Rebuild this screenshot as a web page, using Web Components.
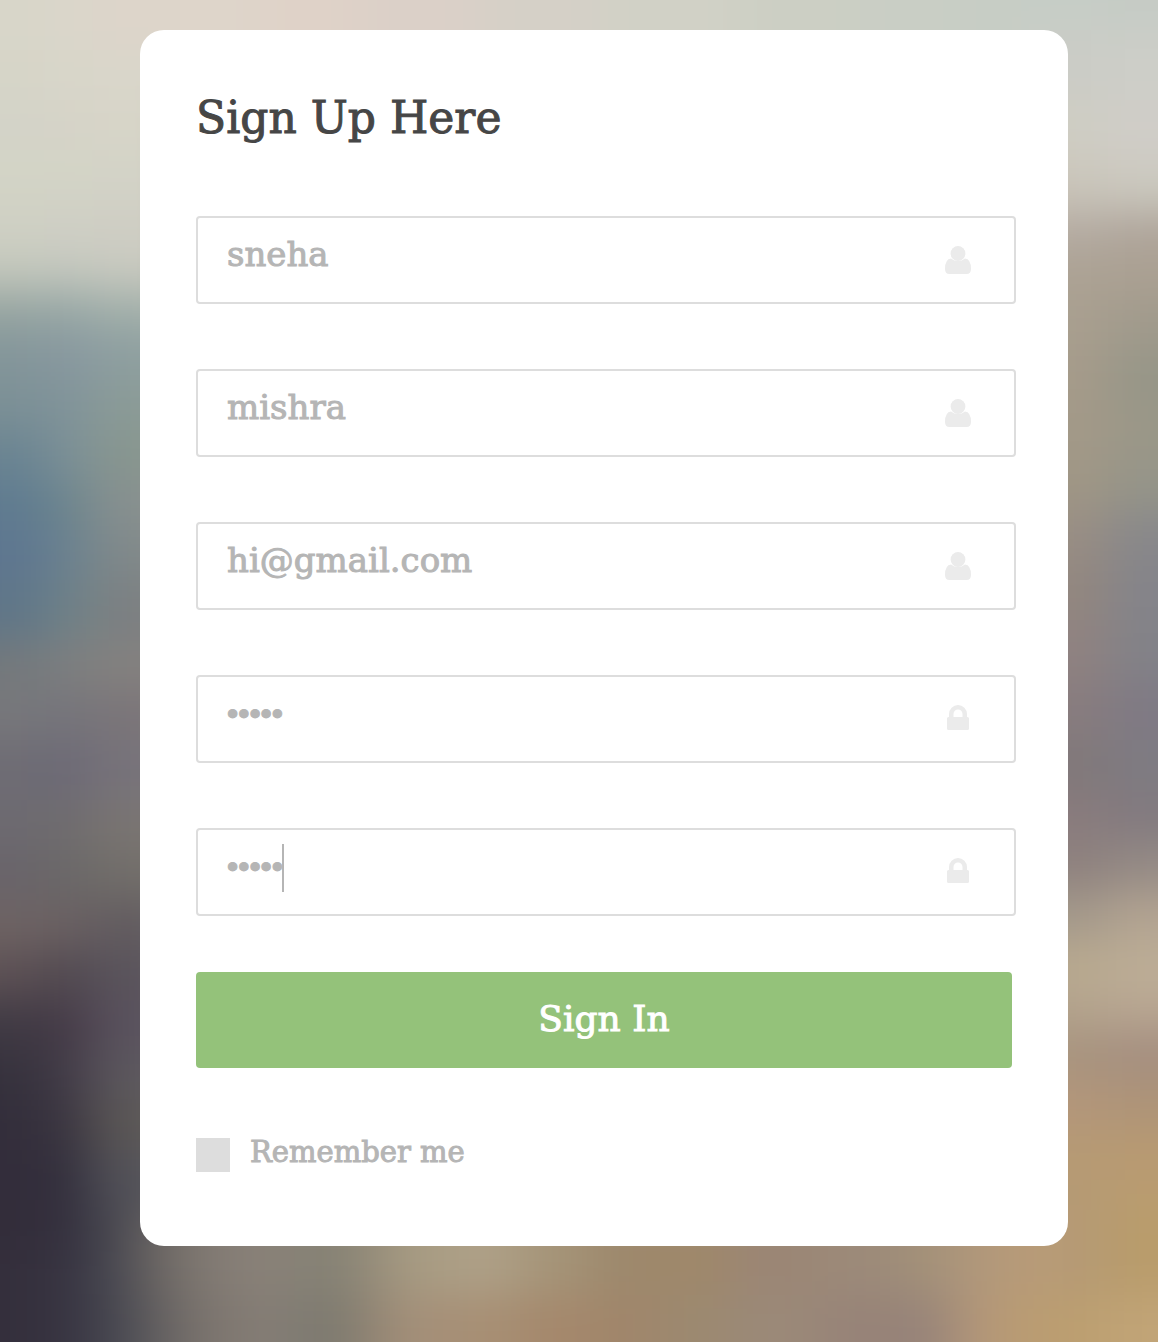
<!DOCTYPE html>
<html lang="en">
<head>
<meta charset="utf-8">
<meta name="viewport" content="width=device-width, initial-scale=1">
<title>Sign Up Here</title>
<style>
  :root {
    --ink: #464646;
    --muted: #b5b5b5;
    --line: #dddddd;
    --icon: #ebebeb;
    --accent: #94c27a;
  }
  body {
    margin: 0;
    min-height: 100vh;
    font-family: "DejaVu Serif", serif;
    color: var(--ink);
    -webkit-text-stroke: 1px currentColor;
  }
</style>
</head>
<body>
<sign-up-page>
  <sign-up-card heading="Sign Up Here">
    <form-field label="First name" type="text" value="sneha" icon="user"></form-field>
    <form-field label="Last name" type="text" value="mishra" icon="user"></form-field>
    <form-field label="Email" type="email" value="hi@gmail.com" icon="user"></form-field>
    <form-field label="Password" type="password" value="hello" icon="lock"></form-field>
    <form-field label="Confirm password" type="password" value="hello" icon="lock" caret></form-field>
    <submit-button slot="actions">Sign In</submit-button>
    <check-option slot="actions">Remember me</check-option>
  </sign-up-card>
</sign-up-page>

<script>
  function mount(host, html) {
    const template = document.createElement('template');
    template.innerHTML = html;
    host.attachShadow({ mode: 'open' }).append(template.content.cloneNode(true));
  }

  // Out-of-focus photo: coarse colour cells [x, y, width, height, colour] softened by one blur.
  function backdropCells() {
    const cells = [];
    const left = [
      [0, 'd8d6c9 dad6ca ddd5ca'], [50, 'd6d5c8 d8d6c9 d9d6ca'], [100, 'd3d3c8 d6d3c8 d7d5c8'],
      [150, 'd3d4c6 d3d4c6 d3d3c7'], [200, 'cfd0c4 cfcfc5 cfcec4'], [250, 'c3c7bc c3c7be c8c9bf'],
      [290, '98a6a2 98a8a6 a3b0aa'], [330, '84969a 8898a0 8e9fa0'], [380, '7c9096 80939a 8b9b97'],
      [430, '6a8492 7c9097 88968f'], [480, '5f7b90 6d868e 88908f'], [530, '5e7690 6a8290 81898a'],
      [580, '5f7688 6f8288 7c8082'], [640, '74797c 7d7f80 84817f'], [690, '77777b 75747b 7b7579'],
      [740, '6e6c74 6c6976 77737a'], [800, '6d6a70 6f6c6e 7a7572'], [850, '69646a 6a6868 726e6a'],
      [900, '6e6363 6a6062 625c60'], [950, '5c5054 504850 5a545c'], [1000, '403a44 453a47 5a525e'],
      [1050, '36323d 433c48 5c585e'], [1100, '332e3b 3b3641 5c5856'], [1150, '332d3b 33303d 54535a'],
      [1200, '332d3a 34303e 4c4c54'], [1250, '342f3c 383542 4a4a54']
    ];
    const right = [
      [0, 'c6cdc6 c5cbc5'], [30, 'cbccc6 cdcec8'], [100, 'cfcdc3 d0cdc8'], [160, 'cac5ba cbc9bf'],
      [210, 'b5aca3 b0a69c'], [250, 'aca294 aaa092'], [300, 'a99f8f a09a8c'], [350, 'a69b8a 969688'],
      [400, 'a39988 9a9788'], [460, 'a09685 959589'], [510, '998e84 88888a'], [560, '93877f 84848a'],
      [620, '908280 828288'], [680, '887c7e 7f7a84'], [740, '807879 7e7b82'], [790, '897b7d 827a7f'],
      [840, '8e817e 948a85'], [890, 'a3988a b2a391'], [940, 'b8a98f bcad96'], [990, 'b3a38d b8a692'],
      [1030, 'a8947f a58f80'], [1080, 'b3967a ae9478'], [1130, 'b69a74 b89a72'], [1180, 'b59a74 b99c70'],
      [1240, 'b39770 b99c6b'], [1300, 'bfa075 c0a271']
    ];
    const top = [[180, 'ded5ca'], [260, 'dfd2c8'], [360, 'dbd0c8'], [480, 'd5d0c7'], [600, 'd1d1c6'],
      [740, 'cccfc4'], [860, 'c9cec5'], [960, 'c7cdc5']];
    const bottom = [[100, '474851 464750'], [130, '635e5e 59575b'], [160, '77716b 706b68'],
      [200, '857d76 807871'], [250, '8a8278 857e76'], [300, '848174 7b796f'], [350, '948b79 908474'],
      [390, 'a89c83 a59079'], [450, 'aea087 a78f74'], [520, 'a59478 a5886c'], [590, '9d886c a0866b'],
      [660, '9f886a 9c8970'], [730, '9b8675 9b8978'], [820, '9c8a79 978378'], [900, 'a39179 968379'],
      [950, 'b0977b b2967a'], [1000, 'b89b78 ba9c72'], [1060, 'b59a74 bc9f70'], [1110, 'b99c6b c1a477']];
    const columns = (rows, edges) => rows.forEach(([y, colours], i) => {
      const end = i + 1 < rows.length ? rows[i + 1][0] : 1440;
      const from = i ? y : -100;
      colours.split(' ').forEach((c, k) =>
        cells.push([edges[k], from, edges[k + 1] - edges[k], end - from, c]));
    });
    columns(left, [-100, 45, 92, 190]);
    columns(right, [1010, 1108, 1260]);
    top.forEach(([x, c], i) => {
      const end = top[i + 1] ? top[i + 1][0] : 1020;
      cells.push([x, -100, end - x, 200, c]);
    });
    bottom.forEach(([x, colours], i) => {
      const end = bottom[i + 1] ? bottom[i + 1][0] : 1260;
      const [a, b] = colours.split(' ');
      cells.push([x, 1210, end - x, 85, a], [x, 1295, end - x, 145, b]);
    });
    return cells.map(([x, y, w, h, c]) =>
      `<rect x="${x}" y="${y}" width="${w + 1}" height="${h + 1}" fill="#${c}"/>`).join('');
  }

  customElements.define('sign-up-page', class extends HTMLElement {
    constructor() {
      super();
      mount(this, `
        <style>
          :host { display: grid; box-sizing: border-box; min-height: 100vh; overflow: hidden; }
          svg, main { grid-area: 1 / 1; }
          svg { width: 100%; height: 100%; min-height: 0; contain: size; }
          main { position: relative; box-sizing: border-box; padding: 30px 90px 96px 140px; }
          @media (max-width: 700px) { main { padding: 24px; } }
        </style>
        <svg viewBox="0 0 1158 1342" preserveAspectRatio="none" aria-hidden="true">
          <defs>
            <filter id="soft" filterUnits="userSpaceOnUse" x="-100" y="-100" width="1360" height="1540" color-interpolation-filters="sRGB">
              <feGaussianBlur stdDeviation="26 20"/>
            </filter>
          </defs>
          <g filter="url(#soft)">
            <rect x="-100" y="-100" width="1360" height="1540" fill="#a9a093"/>
            ${backdropCells()}
          </g>
        </svg>
        <main><slot></slot></main>`);
    }
  });

  customElements.define('sign-up-card', class extends HTMLElement {
    constructor() {
      super();
      mount(this, `
        <style>
          :host { display: block; background: #fff; border-radius: 24px; padding: 60px 52px 74px 56px; }
          form { display: flex; flex-direction: column; gap: 56px; }
          h1 { margin: 0; font-size: 44px; line-height: 56px; font-weight: 400; padding-bottom: 14px; }
          .fields { display: flex; flex-direction: column; gap: 65px; }
          .actions { display: flex; flex-direction: column; gap: 70px; padding-right: 4px; }
        </style>
        <form>
          <h1></h1>
          <div class="fields"><slot></slot></div>
          <div class="actions"><slot name="actions"></slot></div>
        </form>`);
      this.shadowRoot.querySelector('h1').textContent = this.getAttribute('heading');
    }
  });

  const icons = {
    user: `<circle cx="15" cy="8.500" r="7.400"/>
      <path d="M8 13.500 Q11 16 15 16 Q19 16 22 13.500 Q28 14 28 24 Q28 29 23.500 29 H6.500 Q2 29 2 24 Q2 14 8 13.500Z"/>`,
    lock: `<path fill-rule="evenodd" d="M6 13 V10 A9 9 0 0 1 24 10 V13 H24.500 Q26 13 26 14.500 V24.500 Q26 26 24.500 26 H5.500 Q4 26 4 24.500 V14.500 Q4 13 5.500 13Z M10.500 13 H19.500 V10 A4.500 4.500 0 0 0 10.500 10Z"/>`
  };

  customElements.define('form-field', class extends HTMLElement {
    constructor() {
      super();
      mount(this, `
        <style>
          :host {
            display: flex; align-items: center; box-sizing: border-box; height: 88px;
            border: 2px solid var(--line); border-radius: 4px; padding: 0 41px 0 29px; position: relative;
          }
          input {
            flex: 1; min-width: 0; height: 84px; box-sizing: border-box; border: 0; outline: 0;
            margin: 0; padding: 0 0 12px; background: none; color: var(--muted);
            font: 34px "DejaVu Serif", serif; -webkit-text-stroke: 1px currentColor;
          }
          input[type=password] { font: 32px "Liberation Sans", sans-serif; }
          svg { flex: none; width: 30px; height: 30px; fill: var(--icon); }
          .caret { position: absolute; left: 84px; top: 14px; width: 2px; height: 48px; background: var(--muted); }
        </style>
        <input>
        <svg viewBox="0 0 30 30" aria-hidden="true">${icons[this.getAttribute('icon')]}</svg>
        ${this.hasAttribute('caret') ? '<span class="caret"></span>' : ''}`);
      const input = this.shadowRoot.querySelector('input');
      input.type = this.getAttribute('type');
      input.value = this.getAttribute('value');
      input.setAttribute('aria-label', this.getAttribute('label'));
    }
  });

  customElements.define('submit-button', class extends HTMLElement {
    constructor() {
      super();
      mount(this, `
        <style>
          :host { display: block; }
          button {
            display: block; width: 100%; height: 96px; border: 0; border-radius: 4px; padding: 0 0 4px;
            background: var(--accent); color: #fff; font: 36px "DejaVu Serif", serif; cursor: pointer;
            -webkit-text-stroke: 1px currentColor;
          }
        </style>
        <button type="button"><slot></slot></button>`);
    }
  });

  customElements.define('check-option', class extends HTMLElement {
    constructor() {
      super();
      mount(this, `
        <style>
          :host { display: flex; align-items: center; gap: 20px; height: 34px; color: var(--muted); -webkit-text-stroke: 1px currentColor; }
          input { appearance: none; flex: none; margin: 0; width: 34px; height: 34px; background: var(--line); }
          input:checked { background: var(--accent); }
          label { font-size: 29px; line-height: 34px; padding-bottom: 6px; }
        </style>
        <input type="checkbox" id="box">
        <label for="box"><slot></slot></label>`);
    }
  });
</script>
</body>
</html>
